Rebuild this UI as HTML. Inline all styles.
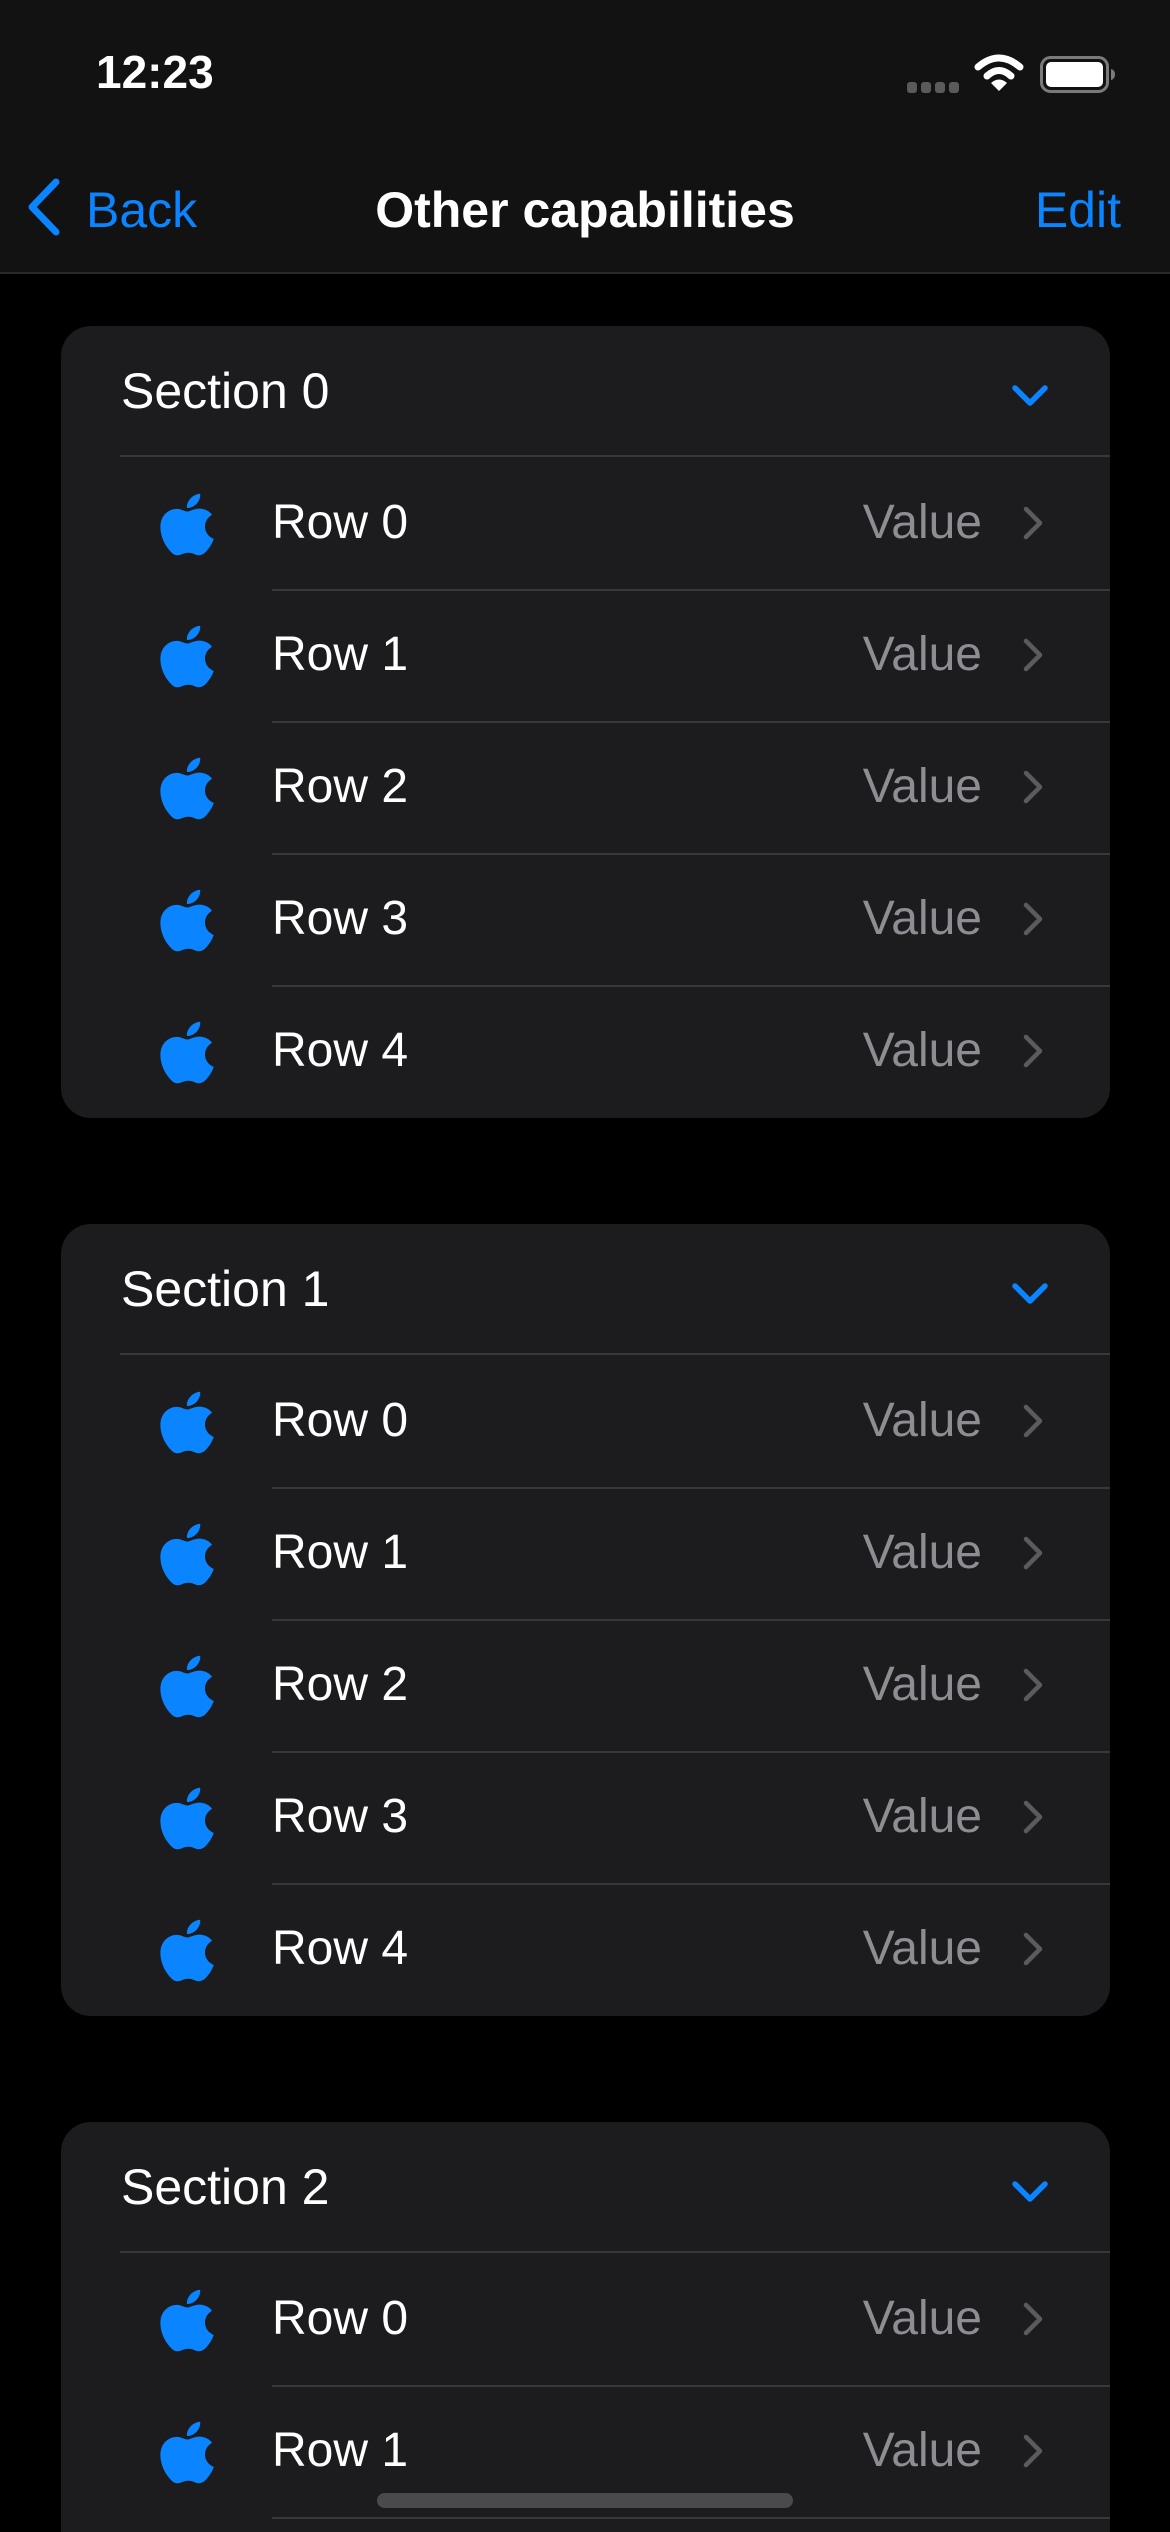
<!DOCTYPE html>
<html><head><meta charset="utf-8">
<style>
*{margin:0;padding:0;box-sizing:border-box}
html,body{width:1170px;height:2532px;background:#000;overflow:hidden;font-family:"Liberation Sans",sans-serif;position:relative}
.top{position:absolute;left:0;top:0;width:1170px;height:274px;background:#121212;border-bottom:2px solid #2a2a2c}
.abs{position:absolute;white-space:nowrap}
.card{position:absolute;left:61px;width:1049px;background:#1c1c1e;border-radius:30px;overflow:hidden}
.hdr{position:relative;height:131px}
.hdr .t{position:absolute;left:60px;top:0;line-height:131px;font-size:50px;color:#fff}
.hdr svg{position:absolute;left:949px;top:57px}
.hdr:after{content:"";position:absolute;left:59px;right:0;bottom:0;height:2px;background:#38383a}
.row{position:relative;height:132px}
.row .ic{position:absolute;left:99px;top:34px}
.row .l{position:absolute;left:211px;line-height:132px;font-size:48px;color:#fff}
.row .v{position:absolute;right:128px;line-height:132px;font-size:48px;color:#8d8d93}
.row .ch{position:absolute;left:960px;top:48px}
.row+.row:before{content:"";position:absolute;left:211px;right:0;top:0;height:2px;background:#38383a}
</style></head><body>
<svg width="0" height="0" style="position:absolute">
<symbol id="ap" viewBox="2.8 0 18.2 23.6" preserveAspectRatio="none"><path fill="#0a84ff" d="M16.365 1.43c0 1.14-.493 2.27-1.177 3.08-.744.9-1.99 1.57-2.987 1.57-.12 0-.23-.02-.3-.03-.01-.06-.04-.22-.04-.39 0-1.15.572-2.27 1.206-2.98.804-.94 2.142-1.64 3.248-1.680.03.13.05.28.05.43zm4.565 15.71c-.03.07-.463 1.58-1.518 3.12-.945 1.34-1.94 2.71-3.43 2.71-1.517 0-1.9-.88-3.63-.88-1.698 0-2.302.91-3.67.91-1.377 0-2.332-1.26-3.428-2.8-1.287-1.82-2.323-4.63-2.323-7.28 0-4.28 2.797-6.55 5.552-6.55 1.448 0 2.675.95 3.6.95.865 0 2.222-1.01 3.902-1.01.613 0 2.886.06 4.374 2.19-.13.09-2.383 1.37-2.383 4.19 0 3.26 2.854 4.42 2.955 4.45z"/></symbol>
<symbol id="chv" viewBox="0 0 24 36"><path d="M5 4 L19 18 L5 32" fill="none" stroke="#5b5b5f" stroke-width="4.5" stroke-linecap="round" stroke-linejoin="round"/></symbol>
<symbol id="dn" viewBox="0 0 40 26"><path d="M5 5 L20 20 L35 5" fill="none" stroke="#0a84ff" stroke-width="5.5" stroke-linecap="round" stroke-linejoin="round"/></symbol>
</svg>
<div class="top"></div>
<div class="abs" style="left:96px;top:42px;font-size:46px;font-weight:bold;color:#fff;line-height:60px">12:23</div>
<svg class="abs" style="left:907px;top:82px" width="52" height="11"><g fill="#5a5a5c"><rect x="0" y="0" width="10" height="11" rx="3"/><rect x="14" y="0" width="10" height="11" rx="3"/><rect x="28" y="0" width="10" height="11" rx="3"/><rect x="42" y="0" width="10" height="11" rx="3"/></g></svg>
<svg class="abs" style="left:974px;top:54px" width="50" height="38" viewBox="0 0 50 38"><g fill="none" stroke="#fff" stroke-width="7" stroke-linecap="round"><path d="M4 13 Q25 -5 46 13"/><path d="M13 22 Q25 11 37 22"/></g><path d="M17 29 Q25 22 33 29 L25 37 Z" fill="#fff"/></svg>
<svg class="abs" style="left:1040px;top:56px" width="76" height="37" viewBox="0 0 76 37"><rect x="1.5" y="1.5" width="66" height="34" rx="9" fill="none" stroke="#7a7a7c" stroke-width="3"/><rect x="6" y="6" width="57" height="25" rx="5" fill="#fff"/><path d="M71 13 Q75 14 75 18.5 Q75 23 71 24 Z" fill="#7a7a7c"/></svg>
<svg class="abs" style="left:26px;top:178px" width="36" height="58" viewBox="0 0 36 58"><path d="M30 4 L6 29 L30 54" fill="none" stroke="#0a84ff" stroke-width="7" stroke-linecap="round" stroke-linejoin="round"/></svg>
<div class="abs" style="left:86px;top:180px;font-size:50px;color:#0a84ff;line-height:60px">Back</div>
<div class="abs" style="left:0;width:1170px;text-align:center;top:180px;font-size:50px;font-weight:bold;color:#fff;line-height:60px">Other capabilities</div>
<div class="abs" style="right:49px;top:180px;font-size:50px;color:#0a84ff;line-height:60px">Edit</div>

<div class="card" style="top:326px;height:792px">
<div class="hdr"><div class="t">Section 0</div><svg width="40" height="26"><use href="#dn"/></svg></div>
<div class="row"><svg class="ic" width="54" height="66"><use href="#ap"/></svg><div class="l">Row 0</div><div class="v">Value</div><svg class="ch" width="24" height="36"><use href="#chv"/></svg></div>
<div class="row"><svg class="ic" width="54" height="66"><use href="#ap"/></svg><div class="l">Row 1</div><div class="v">Value</div><svg class="ch" width="24" height="36"><use href="#chv"/></svg></div>
<div class="row"><svg class="ic" width="54" height="66"><use href="#ap"/></svg><div class="l">Row 2</div><div class="v">Value</div><svg class="ch" width="24" height="36"><use href="#chv"/></svg></div>
<div class="row"><svg class="ic" width="54" height="66"><use href="#ap"/></svg><div class="l">Row 3</div><div class="v">Value</div><svg class="ch" width="24" height="36"><use href="#chv"/></svg></div>
<div class="row"><svg class="ic" width="54" height="66"><use href="#ap"/></svg><div class="l">Row 4</div><div class="v">Value</div><svg class="ch" width="24" height="36"><use href="#chv"/></svg></div>
</div>

<div class="card" style="top:1224px;height:792px">
<div class="hdr"><div class="t">Section 1</div><svg width="40" height="26"><use href="#dn"/></svg></div>
<div class="row"><svg class="ic" width="54" height="66"><use href="#ap"/></svg><div class="l">Row 0</div><div class="v">Value</div><svg class="ch" width="24" height="36"><use href="#chv"/></svg></div>
<div class="row"><svg class="ic" width="54" height="66"><use href="#ap"/></svg><div class="l">Row 1</div><div class="v">Value</div><svg class="ch" width="24" height="36"><use href="#chv"/></svg></div>
<div class="row"><svg class="ic" width="54" height="66"><use href="#ap"/></svg><div class="l">Row 2</div><div class="v">Value</div><svg class="ch" width="24" height="36"><use href="#chv"/></svg></div>
<div class="row"><svg class="ic" width="54" height="66"><use href="#ap"/></svg><div class="l">Row 3</div><div class="v">Value</div><svg class="ch" width="24" height="36"><use href="#chv"/></svg></div>
<div class="row"><svg class="ic" width="54" height="66"><use href="#ap"/></svg><div class="l">Row 4</div><div class="v">Value</div><svg class="ch" width="24" height="36"><use href="#chv"/></svg></div>
</div>

<div class="card" style="top:2122px;height:410px;border-radius:30px 30px 0 0">
<div class="hdr"><div class="t">Section 2</div><svg width="40" height="26"><use href="#dn"/></svg></div>
<div class="row"><svg class="ic" width="54" height="66"><use href="#ap"/></svg><div class="l">Row 0</div><div class="v">Value</div><svg class="ch" width="24" height="36"><use href="#chv"/></svg></div>
<div class="row"><svg class="ic" width="54" height="66"><use href="#ap"/></svg><div class="l">Row 1</div><div class="v">Value</div><svg class="ch" width="24" height="36"><use href="#chv"/></svg></div>
<div class="row" style="height:15px"></div>
</div>

<div class="abs" style="left:377px;top:2493px;width:416px;height:15px;border-radius:8px;background:#4a4a4c"></div>
</body></html>
